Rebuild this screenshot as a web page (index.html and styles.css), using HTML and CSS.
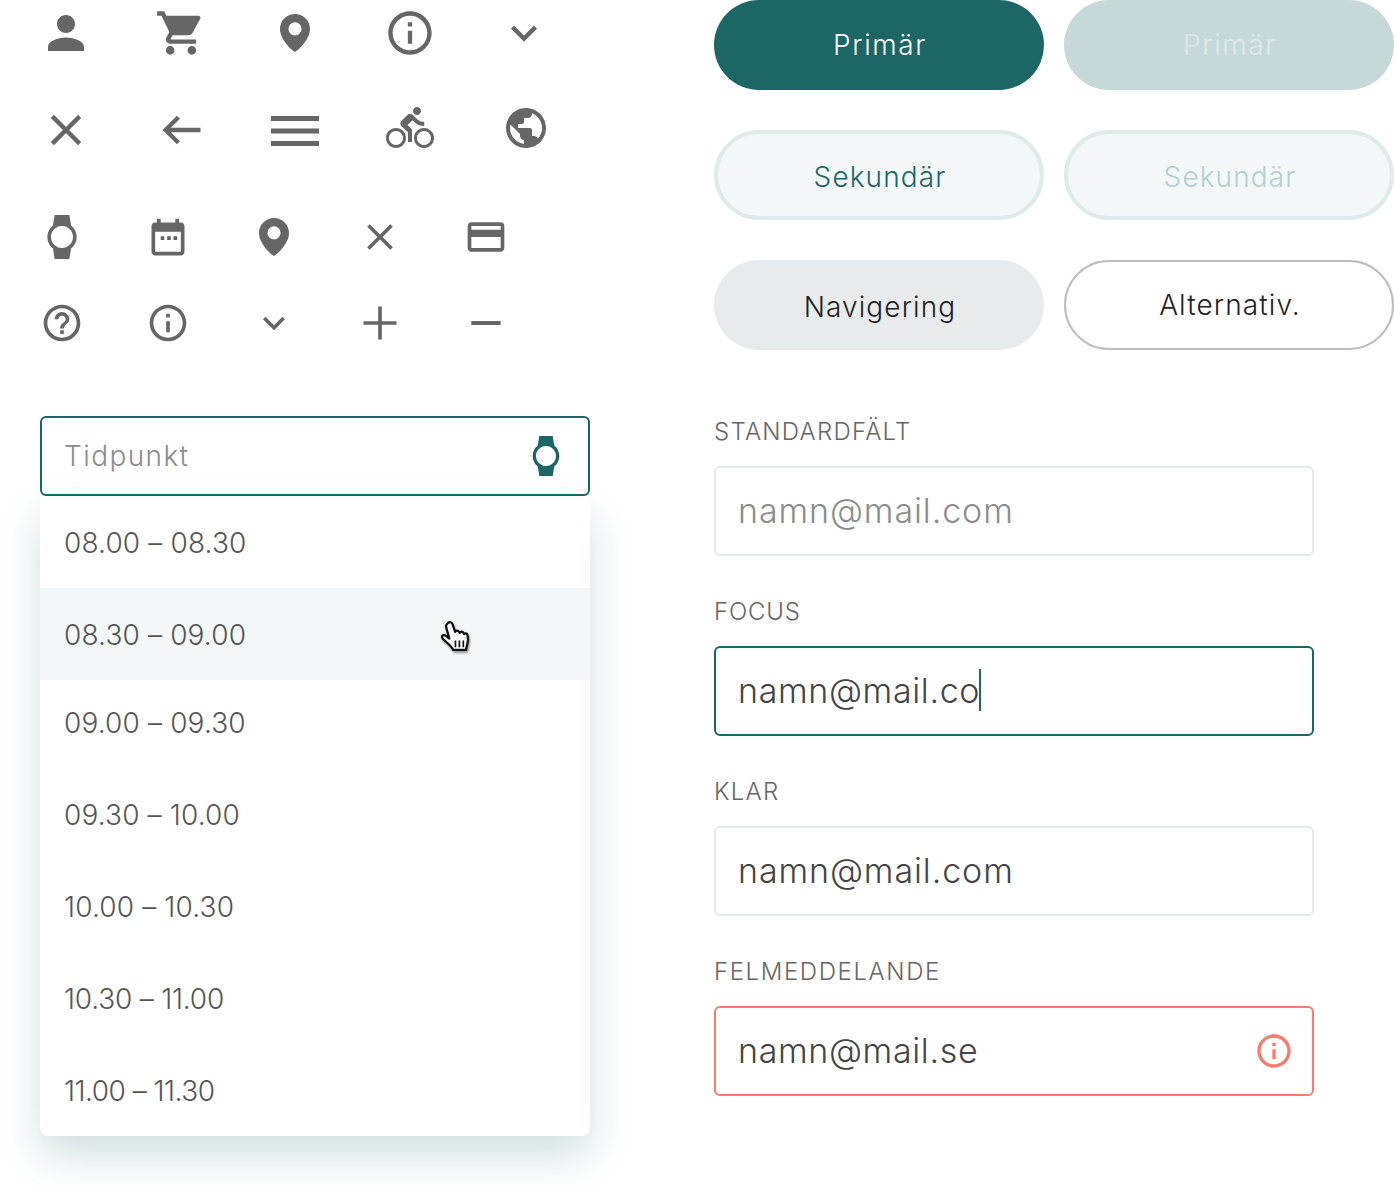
FILE: index.html
```html
<!DOCTYPE html>
<html lang="sv">
<head>
    <meta charset="UTF-8">
    <meta name="viewport" content="width=device-width, initial-scale=1.0">
    <title>Komponenter</title>
    <link rel="stylesheet" href="styles.css">
</head>
<body>
    <svg class="defs" width="0" height="0">
        <symbol id="i-person" viewBox="0 0 24 24"><path d="M12 12c2.210 0 4-1.790 4-4s-1.790-4-4-4-4 1.790-4 4 1.790 4 4 4zm0 2c-2.670 0-8 1.340-8 4v2h16v-2c0-2.660-5.330-4-8-4z"/></symbol>
        <symbol id="i-cart" viewBox="0 0 24 24"><path d="M7 18c-1.100 0-1.990.9-1.990 2S5.900 22 7 22s2-.9 2-2-.9-2-2-2zM1 2v2h2l3.600 7.590-1.350 2.450c-.16.28-.25.610-.25.960 0 1.100.9 2 2 2h12v-2H7.420c-.14 0-.25-.11-.25-.25l.030-.12.9-1.630h7.450c.75 0 1.410-.41 1.750-1.030l3.580-6.490c.08-.14.12-.31.120-.48 0-.55-.45-1-1-1H5.210l-.94-2H1zm16 16c-1.100 0-1.990.9-1.990 2s.89 2 1.990 2 2-.9 2-2-.9-2-2-2z"/></symbol>
        <symbol id="i-place" viewBox="0 0 24 24"><path fill-rule="evenodd" d="M12 2.500C7.860 2.500 4.500 5.860 4.500 10c0 5 5.500 10.500 7.500 11.500 2-1 7.500-6.500 7.500-11.500 0-4.140-3.360-7.500-7.500-7.500zm0 4.100a3.300 3.300 0 1 1 0 6.600 3.300 3.300 0 0 1 0-6.600z"/></symbol>
        <symbol id="i-info" viewBox="0 0 24 24"><path d="M11 7h2v2h-2zm0 4h2v6h-2zm1-9C6.480 2 2 6.480 2 12s4.480 10 10 10 10-4.480 10-10S17.520 2 12 2zm0 18c-4.410 0-8-3.590-8-8s3.590-8 8-8 8 3.590 8 8-3.590 8-8 8z"/></symbol>
        <symbol id="i-down" viewBox="0 0 24 24"><path d="M7.410 8.590 12 13.170l4.590-4.580L18 10l-6 6-6-6z"/></symbol>
        <symbol id="i-close" viewBox="0 0 24 24"><path d="M19 6.410 17.590 5 12 10.590 6.410 5 5 6.410 10.590 12 5 17.590 6.410 19 12 13.410 17.590 19 19 17.590 13.410 12z"/></symbol>
        <symbol id="i-back" viewBox="0 0 24 24"><path d="M21 11H7.300l4.200-4.200-1.400-1.400L3.500 12l6.600 6.600 1.400-1.400L7.300 13H21z"/></symbol>
        <symbol id="i-menu" viewBox="0 0 24 24"><path d="M0 5h24v2.500H0zm0 6.250h24v2.500H0zm0 6.250h24V20H0z"/></symbol>
        <symbol id="i-bike" viewBox="0 0 24 24"><path d="M15.500 5.500c1.100 0 2-.9 2-2s-.9-2-2-2-2 .9-2 2 .9 2 2 2zM5 12c-2.800 0-5 2.200-5 5s2.200 5 5 5 5-2.200 5-5-2.200-5-5-5zm0 8.500c-1.900 0-3.500-1.600-3.500-3.500s1.600-3.500 3.500-3.500 3.500 1.600 3.500 3.500-1.600 3.500-3.500 3.500zm5.800-10 2.400-2.400.8.800c1.300 1.300 3 2.100 5.100 2.100V9c-1.500 0-2.700-.6-3.600-1.500l-1.900-1.900c-.5-.4-1-.6-1.600-.6s-1.100.2-1.400.6L7.800 8.400c-.4.400-.6.900-.6 1.400 0 .6.200 1.100.6 1.400L11 14v5h2v-6.200l-2.200-2.300zM19 12c-2.800 0-5 2.200-5 5s2.200 5 5 5 5-2.200 5-5-2.200-5-5-5zm0 8.500c-1.900 0-3.500-1.600-3.500-3.500s1.600-3.500 3.500-3.500 3.500 1.600 3.500 3.500-1.600 3.500-3.500 3.500z"/></symbol>
        <symbol id="i-globe" viewBox="0 0 24 24"><path d="M12 2C6.480 2 2 6.480 2 12s4.480 10 10 10 10-4.480 10-10S17.520 2 12 2zm-1 17.930c-3.950-.49-7-3.850-7-7.930 0-.62.080-1.210.210-1.790L9 15v1c0 1.100.9 2 2 2v1.930zm6.900-2.540c-.26-.81-1-1.390-1.900-1.390h-1v-3c0-.55-.45-1-1-1H8v-2h2c.55 0 1-.45 1-1V7h2c1.100 0 2-.9 2-2v-.41c2.930 1.190 5 4.060 5 7.410 0 2.080-.8 3.970-2.100 5.390z"/></symbol>
        <symbol id="i-watch" viewBox="0 0 24 24"><path d="M20 12c0-2.540-1.190-4.810-3.040-6.270L16 0H8l-.95 5.730C5.190 7.190 4 9.450 4 12s1.190 4.810 3.050 6.270L8 24h8l.96-5.730C18.810 16.810 20 14.540 20 12zM6 12c0-3.310 2.690-6 6-6s6 2.690 6 6-2.690 6-6 6-6-2.690-6-6z"/></symbol>
        <symbol id="i-calendar" viewBox="0 0 24 24"><path d="M8 10.500h2v2H8zm3.500 0h2v2h-2zm3.500 0h2v2h-2zM19 3h-1V1h-2v2H8V1H6v2H5C3.890 3 3 3.900 3 5v14c0 1.100.89 2 2 2h14c1.100 0 2-.9 2-2V5c0-1.100-.9-2-2-2zm0 16H5V8h14v11z"/></symbol>
        <symbol id="i-card" viewBox="0 0 24 24"><path d="M20 4H4c-1.110 0-1.990.89-1.990 2L2 18c0 1.110.89 2 2 2h16c1.110 0 2-.89 2-2V6c0-1.110-.89-2-2-2zm0 14H4v-6h16v6zm0-10H4V6h16v2z"/></symbol>
        <symbol id="i-help" viewBox="0 0 24 24"><path d="M11 16h2v2h-2zm1-14C6.480 2 2 6.480 2 12s4.480 10 10 10 10-4.480 10-10S17.520 2 12 2zm0 18c-4.410 0-8-3.590-8-8s3.590-8 8-8 8 3.590 8 8-3.590 8-8 8zm0-14c-2.210 0-4 1.790-4 4h2c0-1.100.9-2 2-2s2 .9 2 2c0 2-3 1.750-3 5h2c0-2.250 3-2.500 3-5 0-2.210-1.790-4-4-4z"/></symbol>
        <symbol id="i-plus" viewBox="0 0 24 24"><path d="M21 13h-8v8h-2v-8H3v-2h8V3h2v8h8z"/></symbol>
        <symbol id="i-minus" viewBox="0 0 24 24"><path d="M4 10.900h16v2.200H4z"/></symbol>
    </svg>

    <div class="page">
        <div class="left">
            <div class="icons-big">
                <svg class="ic ic-54"><use href="#i-person"/></svg>
                <svg class="ic ic-52"><use href="#i-cart"/></svg>
                <svg class="ic"><use href="#i-place"/></svg>
                <svg class="ic ic-52"><use href="#i-info"/></svg>
                <svg class="ic ic-52"><use href="#i-down"/></svg>
                <svg class="ic ic-52"><use href="#i-close"/></svg>
                <svg class="ic ic-52"><use href="#i-back"/></svg>
                <svg class="ic"><use href="#i-menu"/></svg>
                <svg class="ic raised"><use href="#i-bike"/></svg>
                <svg class="ic raised shifted"><use href="#i-globe"/></svg>
            </div>
            <div class="icons-small">
                <svg class="ic"><use href="#i-watch"/></svg>
                <svg class="ic lowered"><use href="#i-calendar"/></svg>
                <svg class="ic ic-48"><use href="#i-place"/></svg>
                <svg class="ic"><use href="#i-close"/></svg>
                <svg class="ic"><use href="#i-card"/></svg>
                <svg class="ic"><use href="#i-help"/></svg>
                <svg class="ic"><use href="#i-info"/></svg>
                <svg class="ic"><use href="#i-down"/></svg>
                <svg class="ic"><use href="#i-plus"/></svg>
                <svg class="ic"><use href="#i-minus"/></svg>
            </div>
            <div class="select">
                <div class="select-box">
                    <span>Tidpunkt</span>
                    <svg class="select-icon"><use href="#i-watch"/></svg>
                </div>
                <ul class="options">
                    <li>08.00 – 08.30</li>
                    <li class="hover">08.30 – 09.00
                        <svg class="hand" viewBox="0 0 32 32">
                            <path d="M9 3.500c1.500-1.300 3.300-.6 3.900 1l2.300 7c.5-1.500 2.700-1.600 3.400-.2l.7 1c.6-1.300 2.600-1.300 3.300 0l.6 1c.8-.9 2.600-.6 3 .8.700 2.600.5 6.500-.4 9.200-.4 1.300-.8 2.800-.8 4.200H13.500c-.8-2.400-3.300-4.600-6.300-7.300-1.700-1.500-4-3-3.700-4.700.3-1.500 2.400-1.500 3.600-.5l3 2.400-2.800-10c-.4-1.300.2-2.900 1.700-3.900z" fill="#fff" stroke="#111" stroke-width="2" stroke-linejoin="round"/>
                            <path d="M15.500 19v6M19 19v6M22.500 19v6" stroke="#111" stroke-width="1.500" fill="none"/>
                        </svg>
                    </li>
                    <li class="short">09.00 – 09.30</li>
                    <li>09.30 – 10.00</li>
                    <li>10.00 – 10.30</li>
                    <li class="tight">10.30 – 11.00</li>
                    <li class="tighter">11.00 – 11.30</li>
                </ul>
            </div>
        </div>

        <div class="right">
            <div class="buttons">
                <div class="btn primary">Primär</div>
                <div class="btn primary-off">Primär</div>
                <div class="btn second">Sekundär</div>
                <div class="btn second-off">Sekundär</div>
                <div class="btn nav">Navigering</div>
                <div class="btn alt">Alternativ.</div>
            </div>
            <div class="forms">
                <div class="field">
                    <label>STANDARDFÄLT</label>
                    <div class="input placeholder">namn@mail.com</div>
                </div>
                <div class="field">
                    <label class="narrow">FOCUS</label>
                    <div class="input focus">namn@mail.co<span class="caret"></span></div>
                </div>
                <div class="field">
                    <label>KLAR</label>
                    <div class="input">namn@mail.com</div>
                </div>
                <div class="field">
                    <label class="wide">FELMEDDELANDE</label>
                    <div class="input error">namn@mail.se
                        <svg class="error-icon"><use href="#i-info"/></svg>
                    </div>
                </div>
            </div>
        </div>
    </div>
</body>
</html>
```

FILE: styles.css
```css
html,body,ul,li{margin:0;padding:0;}
li{list-style:none;}
body{
    background:#fff;
    color:#333;
    font-family:"Inter","Open Sans",sans-serif;
    font-weight:300;
}
.defs{
    position:absolute;
}
.page{
    display:grid;
    grid-template-columns:550px 680px;
    column-gap:124px;
    padding-left:40px;
    width:1354px;
    height:1190px;
    overflow:hidden;
}
.ic{
    fill:#666;
}

/* ikoner */
.icons-big{
    display:grid;
    grid-template-columns:repeat(5,48px);
    grid-auto-rows:48px;
    column-gap:66.6px;
    row-gap:49px;
    place-items:center;
    padding:9px 0 0 2px;
}
.icons-big .ic{
    width:48px;
    height:48px;
}
.icons-big .ic-52{
    width:52px;
    height:52px;
}
.icons-big .ic-54{
    width:54px;
    height:54px;
}
.raised{
    margin-bottom:4px;
}
.shifted{
    margin-left:4px;
}
.icons-small{
    display:grid;
    grid-template-columns:repeat(5,40px);
    grid-auto-rows:40px;
    column-gap:66px;
    row-gap:46px;
    place-items:center;
    margin-top:63px;
    padding-left:2px;
}
.icons-small .ic{
    width:44px;
    height:44px;
}
.icons-small .ic-48{
    width:48px;
    height:48px;
}
.lowered{
    margin-top:4px;
}

/* tidpunkt */
.select{
    margin-top:73px;
}
.select-box{
    display:flex;
    align-items:center;
    justify-content:space-between;
    box-sizing:border-box;
    height:80px;
    padding:0 22px;
    border:2px solid #1c6665;
    border-radius:6px;
    font-size:28px;
    letter-spacing:1.4px;
    color:#8c8c8c;
}
.select-icon{
    width:40px;
    height:40px;
    fill:#1c6665;
}
.options{
    border-radius:0 0 8px 8px;
    background:#fff;
    box-shadow:0 20px 40px rgba(28,102,101,.2);
}
.options li{
    position:relative;
    display:flex;
    align-items:center;
    box-sizing:border-box;
    height:92px;
    padding:1px 0 0 24px;
    font-size:28px;
    letter-spacing:.15px;
    color:#555;
}
.options li.short{
    height:88px;
    padding-bottom:3px;
    padding-top:0;
}
.options li.tight{
    letter-spacing:-.2px;
}
.options li.tighter{
    letter-spacing:-.5px;
}
.options li.hover{
    background:#f3f7f7;
}
.hand{
    position:absolute;
    left:398px;
    top:31px;
    width:36px;
    height:36px;
    filter:drop-shadow(1px 2px 1px rgba(0,0,0,.4));
}

/* knappar */
.buttons{
    display:grid;
    grid-template-columns:330px 330px;
    grid-auto-rows:90px;
    column-gap:20px;
    row-gap:40px;
}
.btn{
    display:flex;
    align-items:center;
    justify-content:center;
    box-sizing:border-box;
    padding-left:2px;
    border-radius:45px;
    font-size:28px;
    letter-spacing:1.1px;
}
.primary{
    background:#1c6665;
    color:#fff;
    letter-spacing:1.6px;
}
.primary-off{
    background:#c6d9d8;
    color:#dde9e8;
    letter-spacing:1.6px;
}
.second{
    background:#f3f7f7;
    border:4px solid #dfebea;
    color:#1c6665;
    padding-top:4px;
}
.second-off{
    background:#f3f7f7;
    border:4px solid #dfebea;
    color:#b3d0cd;
    padding-top:4px;
}
.nav{
    background:#e8ebec;
    color:#222;
    padding-top:4px;
}
.alt{
    background:#fff;
    border:2px solid #bdbdbd;
    color:#222;
}

/* falt */
.forms{
    margin-top:70px;
    width:600px;
}
.field{
    margin-bottom:44px;
}
.field label{
    display:block;
    height:24px;
    margin-bottom:22px;
    font-size:24px;
    line-height:24px;
    letter-spacing:1.25px;
    color:#666;
}
.field label.narrow{
    letter-spacing:.8px;
}
.field label.wide{
    letter-spacing:1.6px;
}
.input{
    display:flex;
    align-items:center;
    box-sizing:border-box;
    height:90px;
    padding:0 22px 2px;
    border:2px solid #e4e8e8;
    border-radius:6px;
    font-size:34px;
    letter-spacing:.9px;
    color:#444;
}
.placeholder{
    color:#8c8c8c;
}
.focus{
    border-color:#1c6665;
    letter-spacing:.65px;
}
.caret{
    width:2px;
    height:42px;
    margin-left:-1px;
    background:#1c6665;
}
.error{
    justify-content:space-between;
    border-color:#fa7a70;
    letter-spacing:.65px;
}
.error-icon{
    width:40px;
    height:40px;
    margin:2px -4px 0 0;
    fill:#fa7a70;
}
```
